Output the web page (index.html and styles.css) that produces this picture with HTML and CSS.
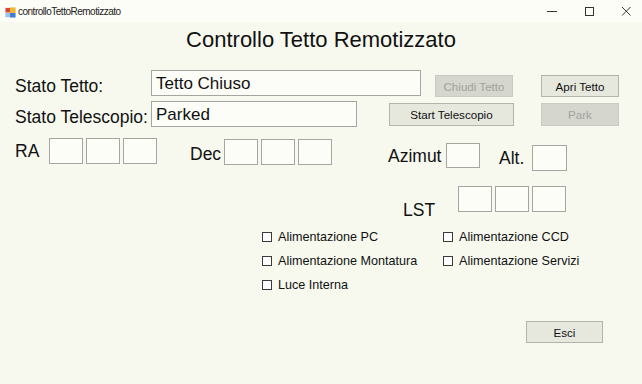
FILE: index.html
```html
<!DOCTYPE html>
<html lang="it">
<head>
<meta charset="utf-8">
<title>controlloTettoRemotizzato</title>
<link rel="stylesheet" href="styles.css">
</head>
<body>
<div class="window">
  <div class="titlebar">
    <svg class="app-icon" viewBox="0 0 11 11" width="11" height="11">
      <rect x="0" y="0" width="11" height="11" fill="#f0f0ea"/>
      <rect x="0.5" y="1" width="4.5" height="4.5" fill="#d8473b"/>
      <rect x="5" y="0.5" width="5.5" height="5.5" fill="#f2b632"/>
      <rect x="5" y="6" width="5.5" height="4.5" fill="#3d7fd4"/>
      <rect x="0.5" y="6" width="4.5" height="4" fill="#9fc3e8"/>
    </svg>
    <span class="title-text">controlloTettoRemotizzato</span>
    <div class="controls">
      <svg class="ctl" viewBox="0 0 10 10" width="10" height="10"><line x1="0" y1="5.5" x2="10" y2="5.5" stroke="#333" stroke-width="1"/></svg>
      <svg class="ctl" viewBox="0 0 10 10" width="10" height="10"><rect x="1.5" y="1.5" width="8" height="8" fill="none" stroke="#333" stroke-width="1"/></svg>
      <svg class="ctl" viewBox="0 0 10 10" width="10" height="10"><path d="M1 1 L9.5 9.5 M9.5 1 L1 9.5" stroke="#333" stroke-width="1" fill="none"/></svg>
    </div>
  </div>

  <div class="client">
    <h1 class="heading">Controllo Tetto Remotizzato</h1>

    <div class="row row-tetto">
      <span class="label lbl-stato">Stato Tetto:</span>
      <div class="textbox tb-tetto">Tetto Chiuso</div>
      <button class="btn btn-chiudi" disabled>Chiudi Tetto</button>
      <button class="btn btn-apri">Apri Tetto</button>
    </div>

    <div class="row row-tele">
      <span class="label lbl-stato">Stato Telescopio:</span>
      <div class="textbox tb-tele">Parked</div>
      <button class="btn btn-start">Start Telescopio</button>
      <button class="btn btn-park" disabled>Park</button>
    </div>

    <div class="row row-coord">
      <span class="label lbl-ra">RA</span>
      <div class="boxes boxes-ra">
        <div class="cell"></div><div class="cell"></div><div class="cell"></div>
      </div>
      <span class="label lbl-dec">Dec</span>
      <div class="boxes boxes-dec">
        <div class="cell"></div><div class="cell"></div><div class="cell"></div>
      </div>
      <span class="label lbl-az">Azimut</span>
      <div class="cell cell-az"></div>
      <span class="label lbl-alt">Alt.</span>
      <div class="cell cell-alt"></div>
    </div>

    <div class="row row-lst">
      <span class="label lbl-lst">LST</span>
      <div class="boxes">
        <div class="cell"></div><div class="cell"></div><div class="cell"></div>
      </div>
    </div>

    <div class="checks">
      <label class="check"><span class="box"></span><span class="check-text">Alimentazione PC</span></label>
      <label class="check"><span class="box"></span><span class="check-text">Alimentazione CCD</span></label>
      <label class="check"><span class="box"></span><span class="check-text">Alimentazione Montatura</span></label>
      <label class="check"><span class="box"></span><span class="check-text">Alimentazione Servizi</span></label>
      <label class="check"><span class="box"></span><span class="check-text">Luce Interna</span></label>
    </div>

    <div class="footer">
      <button class="btn btn-esci">Esci</button>
    </div>
  </div>
</div>
</body>
</html>
```

FILE: styles.css
```css
* { box-sizing: border-box; }

html, body {
  margin: 0;
  padding: 0;
}

body {
  width: 642px;
  height: 384px;
  overflow: hidden;
  background: #f7f9ef;
  font-family: "Liberation Sans", Arial, sans-serif;
  color: #111;
}

.window {
  display: flex;
  flex-direction: column;
  height: 384px;
}

/* ---------- title bar ---------- */
.titlebar {
  height: 22px;
  flex: 0 0 22px;
  background: #fdfdf7;
  display: flex;
  align-items: center;
  padding-left: 5px;
}

.app-icon {
  display: block;
  margin-top: 2px;
}

.title-text {
  margin-left: 2px;
  font-size: 10px;
  letter-spacing: -0.5px;
  color: #222;
  white-space: nowrap;
}

.controls {
  margin-left: auto;
  margin-right: 11px;
  display: flex;
  gap: 27px;
  align-items: center;
}

.ctl {
  display: block;
}

/* ---------- client area ---------- */
.client {
  display: flex;
  flex-direction: column;
}

.heading {
  margin: 5px 0 0;
  font-size: 22px;
  line-height: 26px;
  font-weight: normal;
  text-align: center;
  color: #111;
}

.row {
  display: flex;
  align-items: flex-start;
  padding-left: 15px;
}

.row-tetto { margin-top: 17px; height: 31px; }
.row-tele { height: 37px; }
.row-coord { height: 48px; }
.row-lst { height: 39px; padding-left: 403px; }

.label {
  font-size: 17.5px;
  line-height: 20px;
  white-space: nowrap;
  color: #111;
}

.lbl-stato { width: 136px; margin-top: 6px; }

.textbox {
  height: 26px;
  background: #fdfdf7;
  border: 1px solid #a5a69f;
  padding: 3px 4px 0;
  font-size: 17px;
  line-height: 20px;
  color: #111;
  white-space: nowrap;
}

.tb-tetto { width: 270px; }
.tb-tele { width: 206px; }

.btn {
  font-family: "Liberation Sans", Arial, sans-serif;
  font-size: 11.6px;
  color: #111;
  background: #e6e8de;
  border: 1px solid #b3b4ab;
  border-radius: 0;
  padding: 0;
  height: 22px;
  width: 78px;
}

.btn:disabled {
  background: #d5d6ce;
  border-color: #c9cac1;
  color: #a2a39d;
}

.btn-chiudi { margin-left: 14px; margin-top: 5px; }
.btn-apri { margin-left: 28px; margin-top: 5px; }
.btn-start { margin-left: 32px; margin-top: 2px; width: 125px; height: 23px; }
.btn-park { margin-left: 27px; margin-top: 2px; height: 23px; }

/* ---------- coordinate boxes ---------- */
.boxes {
  display: flex;
  gap: 3px;
}

.cell {
  width: 34px;
  height: 26px;
  background: #fdfdf7;
  border: 1px solid #a5a69f;
}

.lbl-ra { width: 34px; margin-top: 3px; }
.boxes-ra { margin-top: 0; }
.lbl-dec { width: 34px; margin-left: 33px; margin-top: 6px; }
.boxes-dec { margin-top: 1px; }
.lbl-az { width: 58px; margin-left: 56px; margin-top: 8px; }
.cell-az { height: 25px; margin-top: 5px; }
.lbl-alt { width: 33px; margin-left: 19px; margin-top: 10px; }
.cell-alt { width: 35px; margin-top: 7px; }

.lbl-lst { width: 55px; margin-top: 14px; }

/* ---------- checkboxes ---------- */
.checks {
  display: grid;
  grid-template-columns: 181px auto;
  grid-auto-rows: 24px;
  padding-left: 262px;
}

.check {
  display: flex;
  align-items: center;
  font-size: 12.6px;
  line-height: 15px;
  color: #111;
  white-space: nowrap;
}

.box {
  width: 10px;
  height: 10px;
  border: 1px solid #3a3a3a;
  background: #ffffff;
  flex: 0 0 10px;
}

.check-text {
  margin-left: 6px;
}

/* ---------- footer ---------- */
.footer {
  display: flex;
  justify-content: flex-end;
  padding-right: 39px;
  margin-top: 24px;
}

.btn-esci {
  width: 77px;
  height: 22px;
}
```
